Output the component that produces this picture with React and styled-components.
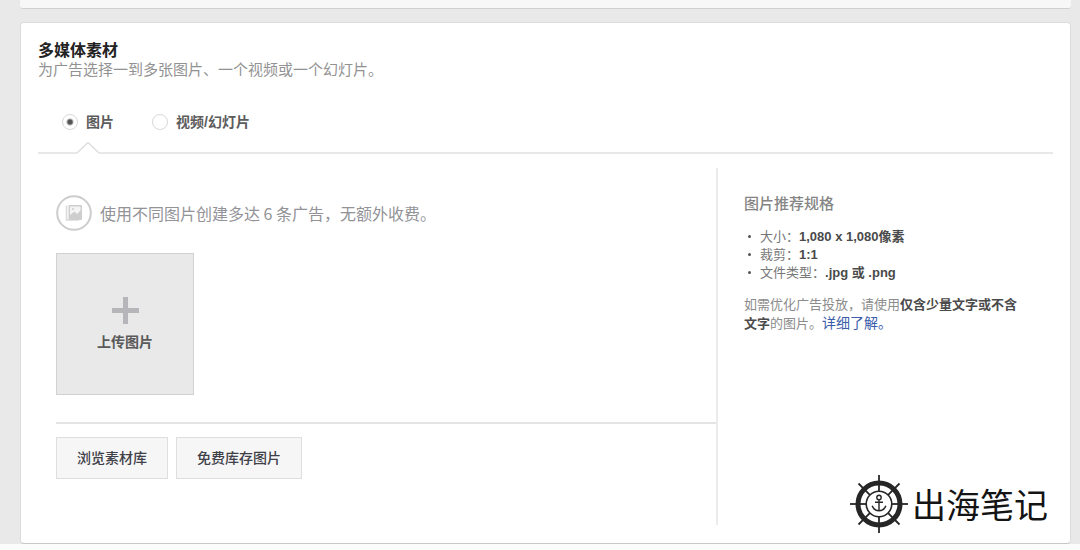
import React, { useState } from "react";
import styled, { createGlobalStyle } from "styled-components";

export default function App() {
    const [format, setFormat] = useState("image");

    return (
        <Page>
            <GlobalStyle />
            <PreviousPanel />
            <Panel>
                <Title>多媒体素材</Title>
                <Subtitle>为广告选择一到多张图片、一个视频或一个幻灯片。</Subtitle>
                <Formats>
                    <Format>
                        <Radio name="format" checked={format === "image"} onChange={() => setFormat("image")} />
                        图片
                        {format === "image" && <Caret />}
                    </Format>
                    <Format>
                        <Radio name="format" checked={format === "video"} onChange={() => setFormat("video")} />
                        视频/幻灯片
                        {format === "video" && <Caret />}
                    </Format>
                </Formats>
                <Columns>
                    <Main>
                        <Hint>
                            <ImageIcon />
                            使用不同图片创建多达 6 条广告，无额外收费。
                        </Hint>
                        <Upload type="button">
                            <PlusIcon />
                            上传图片
                        </Upload>
                        <Actions>
                            <Button type="button">浏览素材库</Button>
                            <Button type="button">免费库存图片</Button>
                        </Actions>
                    </Main>
                    <Specs>
                        <SpecsTitle>图片推荐规格</SpecsTitle>
                        <SpecsList>
                            <Spec>大小：<b>1,080 x 1,080像素</b></Spec>
                            <Spec>裁剪：<b>1:1</b></Spec>
                            <Spec>文件类型：<b>.jpg 或 .png</b></Spec>
                        </SpecsList>
                        <Note>
                            如需优化广告投放，请使用<b>仅含少量文字或不含文字</b>的图片。
                            <Link href="#more">详细了解。</Link>
                        </Note>
                    </Specs>
                </Columns>
                <Brand>
                    <HelmIcon />
                    出海笔记
                </Brand>
            </Panel>
        </Page>
    );
}

function Caret() {
    return (
        <CaretSvg width="24" height="13" viewBox="0 0 24 13" aria-hidden="true">
            <path d="M1 12 L12 1 L23 12 V13 H1 Z" fill="#fff" />
            <path d="M1 12 L12 1.5 L23 12" fill="none" stroke="#dedede" strokeWidth="1.5" />
        </CaretSvg>
    );
}

function ImageIcon() {
    return (
        <svg width="36" height="36" viewBox="0 0 36 36" fill="none" aria-hidden="true">
            <circle cx="18" cy="18" r="16.8" stroke="#cdcdcd" strokeWidth="2" />
            <path d="M10.5 10.5 V25 H23" stroke="#dadada" strokeWidth="1.6" />
            <rect x="12.5" y="10" width="13.5" height="15" rx="1" fill="#cecece" />
            <path d="M14 11.5 H24.5 V15.5 L21 19 L18.5 16.5 L14 20 Z" fill="#f4f4f4" />
            <circle cx="17" cy="14" r="1.1" fill="#cecece" />
        </svg>
    );
}

function PlusIcon() {
    return (
        <svg width="27" height="27" viewBox="0 0 27 27" fill="none" stroke="#b5b5ba" strokeWidth="5" aria-hidden="true">
            <path d="M13.5 0 V27 M0 13.5 H27" />
        </svg>
    );
}

function HelmIcon() {
    const angles = [0, 45, 90, 135, 180, 225, 270, 315];
    return (
        <svg width="58" height="58" viewBox="-29 -29 58 58" fill="none" stroke="#262626" aria-hidden="true">
            <circle r="21" strokeWidth="5" />
            <circle r="12.8" strokeWidth="1.6" />
            {angles.map((angle) => (
                <g key={angle} transform={`rotate(${angle})`}>
                    <path d="M0 -12.6 V-29" strokeWidth="1.8" />
                </g>
            ))}
            <circle cy="-6.6" r="2.2" strokeWidth="1.4" />
            <path d="M0 -4.3 V6.5 M-4 -1.8 H4" strokeWidth="1.4" />
            <path d="M-6.8 1.8 C-5.8 5 -3 6.5 0 6.8 C3 6.5 5.8 5 6.8 1.8" strokeWidth="1.5" />
        </svg>
    );
}

const GlobalStyle = createGlobalStyle`
    * {
        box-sizing: border-box;
    }
    body {
        margin: 0;
        background-color: #fcfcfc;
        font-family: "Liberation Sans", "Noto Sans CJK SC", sans-serif;
    }
    button {
        font-family: inherit;
    }
`
const Page = styled.div`
    padding: 0 9px 0 20px;
    background-color: #e9e9e9;
`
const PreviousPanel = styled.div`
    height: 9px;
    margin-bottom: 13px;
    background-color: #f7f7f7;
    border-bottom: 1px solid #cfcfcf;
    border-radius: 0 0 3px 3px;
`
const Panel = styled.main`
    position: relative;
    padding: 18px 17px;
    background-color: #fff;
    border: 1px solid #dcdcdc;
    border-bottom-color: #c8c8c8;
    border-radius: 4px;
`
const Title = styled.h1`
    margin: 0;
    font-size: 16px;
    line-height: 20px;
    color: #222;
`
const Subtitle = styled.p`
    margin: 0;
    font-size: 15px;
    line-height: 18px;
    color: #929292;
`
const Formats = styled.div`
    display: flex;
    gap: 38px;
    margin-top: 33px;
    padding: 0 24px 20px;
    border-bottom: 2px solid #e8e8e8;
`
const Format = styled.label`
    position: relative;
    display: flex;
    align-items: center;
    gap: 8px;
    font-size: 14px;
    font-weight: bold;
    line-height: 20px;
    color: #5c5c5c;
    cursor: pointer;
`
const Radio = styled.input.attrs({ type: "radio" })`
    appearance: none;
    width: 16px;
    height: 16px;
    margin: 0;
    border: 1px solid #d8d8d8;
    border-radius: 50%;
    background-color: #fff;

    &:checked {
        background-image: radial-gradient(circle, #555 0, #555 2px, transparent 4px);
    }
`
const CaretSvg = styled.svg`
    position: absolute;
    left: 14px;
    bottom: -22px;
`
const Columns = styled.div`
    display: flex;
    margin-top: 14px;
`
const Main = styled.section`
    flex: 1;
    padding: 27px 0 46px 18px;
    border-right: 2px solid #ebebeb;
`
const Hint = styled.p`
    display: flex;
    align-items: center;
    gap: 8px;
    margin: 0 0 22px;
    font-family: "Noto Sans CJK SC", sans-serif;
    font-size: 16px;
    line-height: 20px;
    color: #929297;
`
const Upload = styled.button`
    display: flex;
    flex-direction: column;
    justify-content: center;
    align-items: center;
    gap: 8px;
    width: 138px;
    height: 142px;
    padding: 0;
    border: 1px solid #d2d2d2;
    background-color: #e9e9e9;
    font-size: 14px;
    font-weight: bold;
    line-height: 20px;
    color: #5a5a5a;
    cursor: pointer;
`
const Actions = styled.div`
    display: flex;
    gap: 8px;
    margin-top: 27px;
    padding-top: 13px;
    border-top: 2px solid #e4e4e4;
`
const Button = styled.button`
    height: 42px;
    padding: 0 20px;
    border: 1px solid #dedede;
    background-color: #f6f6f6;
    font-size: 14px;
    font-weight: 500;
    line-height: 20px;
    color: #404048;
    cursor: pointer;
`
const Specs = styled.aside`
    width: 335px;
    padding: 26px 24px 0 26px;
    font-size: 13px;
    line-height: 18px;
    color: #8c8c8c;

    b {
        color: #4a4a4a;
    }
`
const SpecsTitle = styled.h2`
    margin: 0;
    font-size: 15px;
    font-weight: 500;
    line-height: 20px;
    color: #858585;
`
const SpecsList = styled.ul`
    margin: 14px 0;
    padding: 0;
    list-style: none;
    color: #777;
`
const Spec = styled.li`
    &::before {
        content: "";
        display: inline-block;
        width: 3px;
        height: 3px;
        margin: 0 9px 3px 4px;
        border-radius: 50%;
        background-color: #555;
    }
`
const Note = styled.p`
    margin: 0;
`
const Link = styled.a`
    font-size: 14px;
    color: #3b5bab;
    text-decoration: none;
`
const Brand = styled.div`
    position: absolute;
    right: 22px;
    bottom: 10px;
    display: flex;
    align-items: flex-end;
    gap: 4px;
    font-size: 34px;
    line-height: 54px;
    color: #141414;
`
